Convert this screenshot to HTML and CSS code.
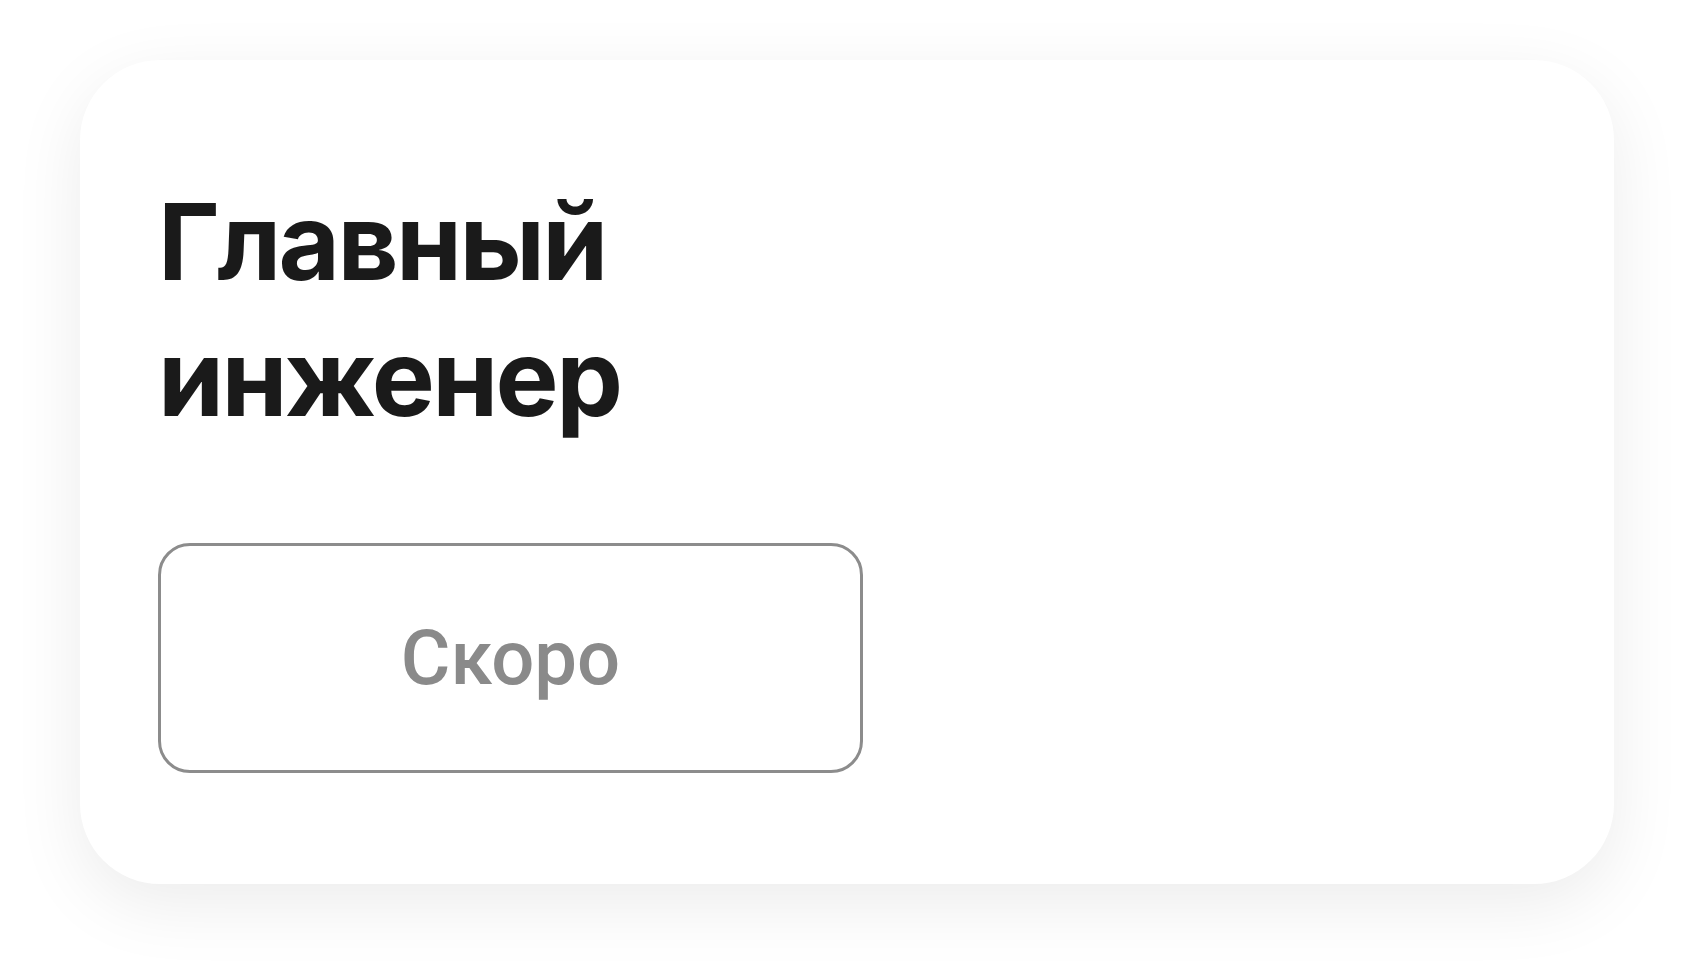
FILE: index.html
```html
<!DOCTYPE html>
<html lang="ru">
<head>
  <meta charset="utf-8">
  <title>Главный инженер</title>
  <link rel="stylesheet" href="styles.css">
</head>
<body>
  <div class="card">
    <h2 class="card-title">Главный<br>инженер</h2>
    <button class="soon-btn" disabled>Скоро</button>
  </div>
</body>
</html>
```
FILE: styles.css
```css
/* Карточка вакансии */
body {
  margin: 0;
  padding: 60px 0 96px 80px;
  min-height: 980px;
  box-sizing: border-box;
  background-color: #fff;
  font-family: Roboto, "Liberation Sans", Arial, sans-serif;
}

.card {
  width: 1534px;
  box-sizing: border-box;
  padding: 114px 78px 111px;
  background-color: #fff;
  border-radius: 80px;
  box-shadow: 0 20px 70px rgba(0, 0, 0, 0.08);
}

.card-title {
  margin: 0 0 97px;
  font-family: Inter, Roboto, sans-serif;
  font-size: 106px;
  line-height: 136px;
  font-weight: 700;
  letter-spacing: -2.6px;
  color: #1a1a1a;
}

.soon-btn {
  display: block;
  width: 705px;
  height: 230px;
  padding: 0;
  background-color: #fff;
  border: 3px solid #8c8c8c;
  border-radius: 32px;
  font-family: inherit;
  font-size: 76px;
  font-weight: 500;
  color: #8a8a8a;
  cursor: default;
}
```
